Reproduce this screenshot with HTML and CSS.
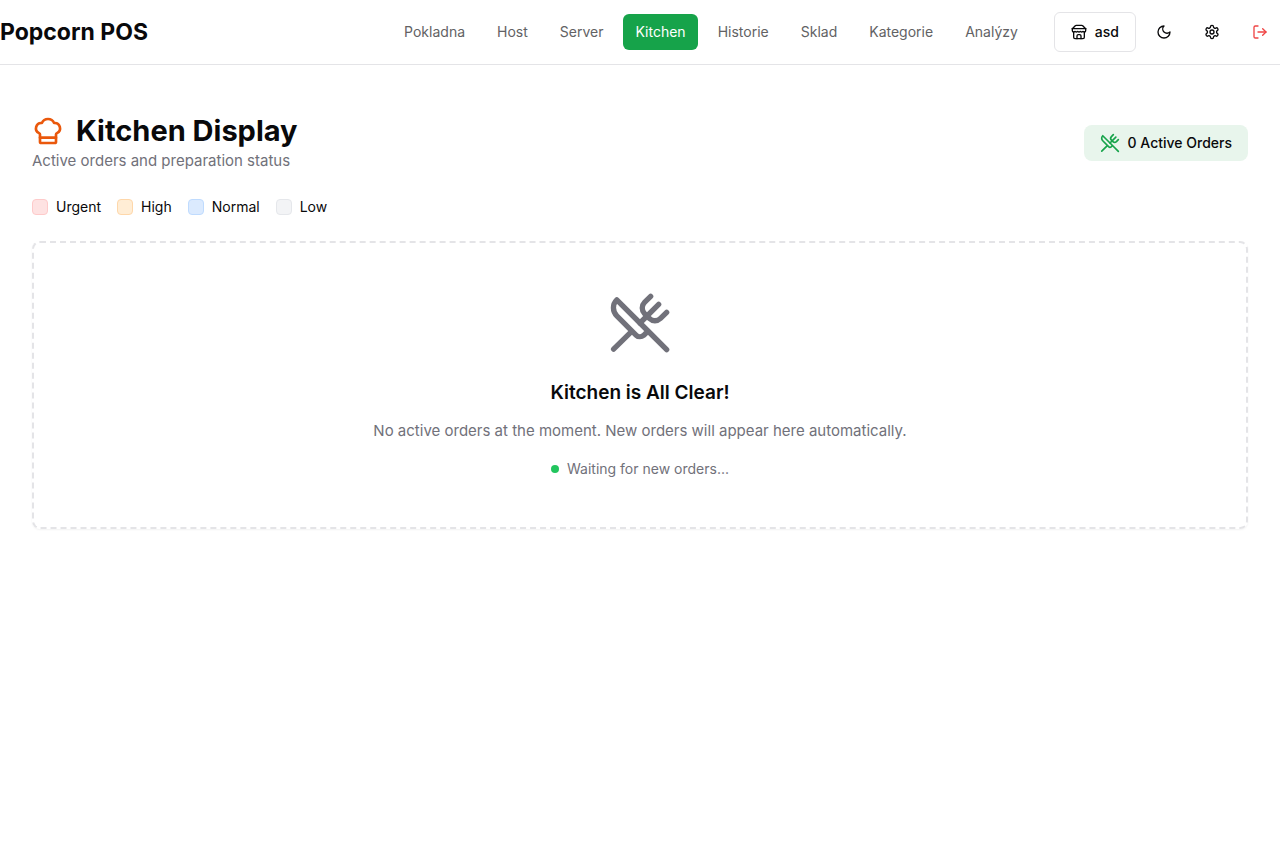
FILE: index.html
```html
<!DOCTYPE html>
<html lang="cs">
<head>
<meta charset="utf-8">
<meta name="viewport" content="width=device-width, initial-scale=1">
<title>Popcorn POS</title>
<link rel="stylesheet" href="styles.css">
</head>
<body>
<header class="topbar">
  <div class="brand">Popcorn POS</div>
  <div class="topbar-end">
    <nav class="nav">
      <a class="nav-link" href="#pokladna">Pokladna</a>
      <a class="nav-link" href="#host">Host</a>
      <a class="nav-link" href="#server">Server</a>
      <a class="nav-link active" href="#kitchen" aria-current="page">Kitchen</a>
      <a class="nav-link" href="#historie">Historie</a>
      <a class="nav-link" href="#sklad">Sklad</a>
      <a class="nav-link" href="#kategorie">Kategorie</a>
      <a class="nav-link" href="#analyzy">Analýzy</a>
    </nav>
    <div class="actions">
      <button class="store-button" type="button">
        <svg class="icon icon-sm" viewBox="0 0 24 24" aria-hidden="true"><path d="m2 7 4.410-4.410A2 2 0 0 1 7.830 2h8.340a2 2 0 0 1 1.420.590L22 7"/><path d="M4 12v8a2 2 0 0 0 2 2h12a2 2 0 0 0 2-2v-8"/><path d="M15 22v-4a2 2 0 0 0-2-2h-2a2 2 0 0 0-2 2v4"/><path d="M2 7h20"/><path d="M22 7v3a2 2 0 0 1-2 2a2.700 2.700 0 0 1-1.590-.630.700.700 0 0 0-.820 0A2.700 2.700 0 0 1 16 12a2.700 2.700 0 0 1-1.590-.630.700.700 0 0 0-.820 0A2.700 2.700 0 0 1 12 12a2.700 2.700 0 0 1-1.590-.630.700.700 0 0 0-.820 0A2.700 2.700 0 0 1 8 12a2.700 2.700 0 0 1-1.590-.630.700.700 0 0 0-.820 0A2.700 2.700 0 0 1 4 12a2 2 0 0 1-2-2V7"/></svg>
        asd
      </button>
      <button class="icon-button" type="button" aria-label="Dark mode">
        <svg class="icon icon-sm" viewBox="0 0 24 24" aria-hidden="true"><path d="M12 3a6 6 0 0 0 9 9 9 9 0 1 1-9-9Z"/></svg>
      </button>
      <button class="icon-button" type="button" aria-label="Settings">
        <svg class="icon icon-sm" viewBox="0 0 24 24" aria-hidden="true"><path d="M12.220 2h-.440a2 2 0 0 0-2 2v.180a2 2 0 0 1-1 1.730l-.430.250a2 2 0 0 1-2 0l-.150-.080a2 2 0 0 0-2.730.730l-.220.380a2 2 0 0 0 .730 2.730l.150.100a2 2 0 0 1 1 1.720v.510a2 2 0 0 1-1 1.740l-.150.090a2 2 0 0 0-.730 2.730l.220.380a2 2 0 0 0 2.730.730l.150-.080a2 2 0 0 1 2 0l.430.250a2 2 0 0 1 1 1.730V20a2 2 0 0 0 2 2h.440a2 2 0 0 0 2-2v-.180a2 2 0 0 1 1-1.730l.430-.250a2 2 0 0 1 2 0l.150.080a2 2 0 0 0 2.730-.730l.220-.390a2 2 0 0 0-.730-2.730l-.150-.080a2 2 0 0 1-1-1.740v-.500a2 2 0 0 1 1-1.740l.150-.090a2 2 0 0 0 .730-2.730l-.220-.380a2 2 0 0 0-2.730-.730l-.150.080a2 2 0 0 1-2 0l-.430-.250a2 2 0 0 1-1-1.730V4a2 2 0 0 0-2-2z"/><circle cx="12" cy="12" r="3"/></svg>
      </button>
      <button class="icon-button danger" type="button" aria-label="Log out">
        <svg class="icon icon-sm" viewBox="0 0 24 24" aria-hidden="true"><path d="M9 21H5a2 2 0 0 1-2-2V5a2 2 0 0 1 2-2h4"/><path d="m16 17 5-5-5-5"/><path d="M21 12H9"/></svg>
      </button>
    </div>
  </div>
</header>
<main class="page">
  <section class="page-head">
    <div>
      <h1 class="title">
        <svg class="icon icon-lg" viewBox="0 0 24 24" aria-hidden="true"><path d="M17 21a1 1 0 0 0 1-1v-5.350c0-.457.316-.844.727-1.041a4 4 0 0 0-2.134-7.589 5 5 0 0 0-9.186 0 4 4 0 0 0-2.134 7.588c.411.198.727.585.727 1.041V20a1 1 0 0 0 1 1Z"/><path d="M6 17h12"/></svg>
        Kitchen Display
      </h1>
      <p class="subtitle">Active orders and preparation status</p>
    </div>
    <div class="badge">
      <svg class="icon icon-md" viewBox="0 0 24 24" aria-hidden="true"><path d="m16 2-2.300 2.300a3 3 0 0 0 0 4.200l1.800 1.800a3 3 0 0 0 4.200 0L22 8"/><path d="M15 15 3.300 3.300a4.200 4.200 0 0 0 0 6l7.300 7.300c.7.7 2 .7 2.800 0L15 15Zm0 0 7 7"/><path d="m2.100 21.800 6.400-6.300"/><path d="m19 5-7 7"/></svg>
      0 Active Orders
    </div>
  </section>
  <ul class="legend">
    <li class="legend-item"><span class="swatch urgent"></span>Urgent</li>
    <li class="legend-item"><span class="swatch high"></span>High</li>
    <li class="legend-item"><span class="swatch normal"></span>Normal</li>
    <li class="legend-item"><span class="swatch low"></span>Low</li>
  </ul>
  <section class="empty">
    <svg class="icon icon-xl" viewBox="0 0 24 24" aria-hidden="true"><path d="m16 2-2.300 2.300a3 3 0 0 0 0 4.200l1.800 1.800a3 3 0 0 0 4.200 0L22 8"/><path d="M15 15 3.300 3.300a4.200 4.200 0 0 0 0 6l7.300 7.300c.7.7 2 .7 2.800 0L15 15Zm0 0 7 7"/><path d="m2.100 21.800 6.400-6.300"/><path d="m19 5-7 7"/></svg>
    <h2 class="empty-title">Kitchen is All Clear!</h2>
    <p class="empty-text">No active orders at the moment. New orders will appear here automatically.</p>
    <p class="waiting"><span class="dot"></span>Waiting for new orders...</p>
  </section>
</main>
</body>
</html>
```

FILE: styles.css
```css
* {
  box-sizing: border-box;
}

body,
h1,
h2,
p,
ul {
  margin: 0;
  padding: 0;
}

body {
  background: #fff;
  color: #09090b;
  font-family: Inter, "Liberation Sans", sans-serif;
  font-size: 14px;
  line-height: 20px;
}

button {
  font: inherit;
  font-weight: 500;
  color: inherit;
  cursor: pointer;
}

.icon {
  flex: none;
  fill: none;
  stroke: currentColor;
  stroke-width: 2;
  stroke-linecap: round;
  stroke-linejoin: round;
}

.icon-sm { width: 16px; height: 16px; }
.icon-md { width: 20px; height: 20px; color: #16a34a; }
.icon-lg { width: 32px; height: 32px; color: #ea580c; }
.icon-xl { width: 64px; height: 64px; color: #71717a; }

.topbar {
  display: flex;
  align-items: center;
  justify-content: space-between;
  min-height: 65px;
  border-bottom: 1px solid #e4e4e7;
}

.brand {
  font-size: 23px;
  line-height: 32px;
  font-weight: 700;
  white-space: nowrap;
}

.topbar-end {
  display: flex;
  align-items: center;
  gap: 24px;
}

.nav,
.actions {
  display: flex;
  align-items: center;
  gap: 8px;
}

.nav-link {
  padding: 8px 12px;
  border-radius: 6px;
  color: #626264;
  font-weight: 400;
  text-decoration: none;
}

.nav-link.active {
  background: #16a34a;
  color: #fff;
}

.store-button {
  display: flex;
  align-items: center;
  gap: 8px;
  height: 40px;
  padding: 0 16px;
  background: #fff;
  border: 1px solid #e4e4e7;
  border-radius: 6px;
}

.icon-button {
  display: grid;
  place-items: center;
  width: 40px;
  height: 40px;
  padding: 0;
  background: none;
  border: 0;
  border-radius: 6px;
}

.danger {
  color: #ef4444;
}

.page {
  display: flex;
  flex-direction: column;
  gap: 24px;
  padding: 48px 32px;
}

.page-head {
  display: flex;
  align-items: center;
  justify-content: space-between;
}

.title {
  display: flex;
  align-items: center;
  gap: 12px;
  font-size: 29px;
  line-height: 36px;
  font-weight: 700;
}

.subtitle {
  color: #71717a;
  font-size: 15px;
  line-height: 24px;
}

.badge {
  display: flex;
  align-items: center;
  gap: 8px;
  padding: 8px 16px;
  background: #e8f5ec;
  border-radius: 8px;
  font-weight: 500;
}

.legend {
  display: flex;
  gap: 16px;
  list-style: none;
}

.legend-item {
  display: flex;
  align-items: center;
  gap: 8px;
}

.swatch {
  width: 16px;
  height: 16px;
  border: 1px solid;
  border-radius: 4px;
}

.urgent { background: #fee2e2; border-color: #fecaca; }
.high { background: #ffedd5; border-color: #fed7aa; }
.normal { background: #dbeafe; border-color: #bfdbfe; }
.low { background: #f3f4f6; border-color: #e5e7eb; }

.empty {
  display: flex;
  flex-direction: column;
  align-items: center;
  padding: 48px;
  border: 2px dashed #e4e4e7;
  border-radius: 8px;
  box-shadow: 0 1px 2px rgba(0, 0, 0, 0.05);
  text-align: center;
}

.empty-title {
  margin-top: 24px;
  font-size: 19px;
  line-height: 28px;
  font-weight: 600;
}

.empty-text {
  margin-top: 12px;
  color: #71717a;
  font-size: 15px;
  line-height: 24px;
}

.waiting {
  display: flex;
  align-items: center;
  gap: 8px;
  margin-top: 16px;
  color: #71717a;
}

.dot {
  width: 8px;
  height: 8px;
  border-radius: 50%;
  background: #22c55e;
}
```
